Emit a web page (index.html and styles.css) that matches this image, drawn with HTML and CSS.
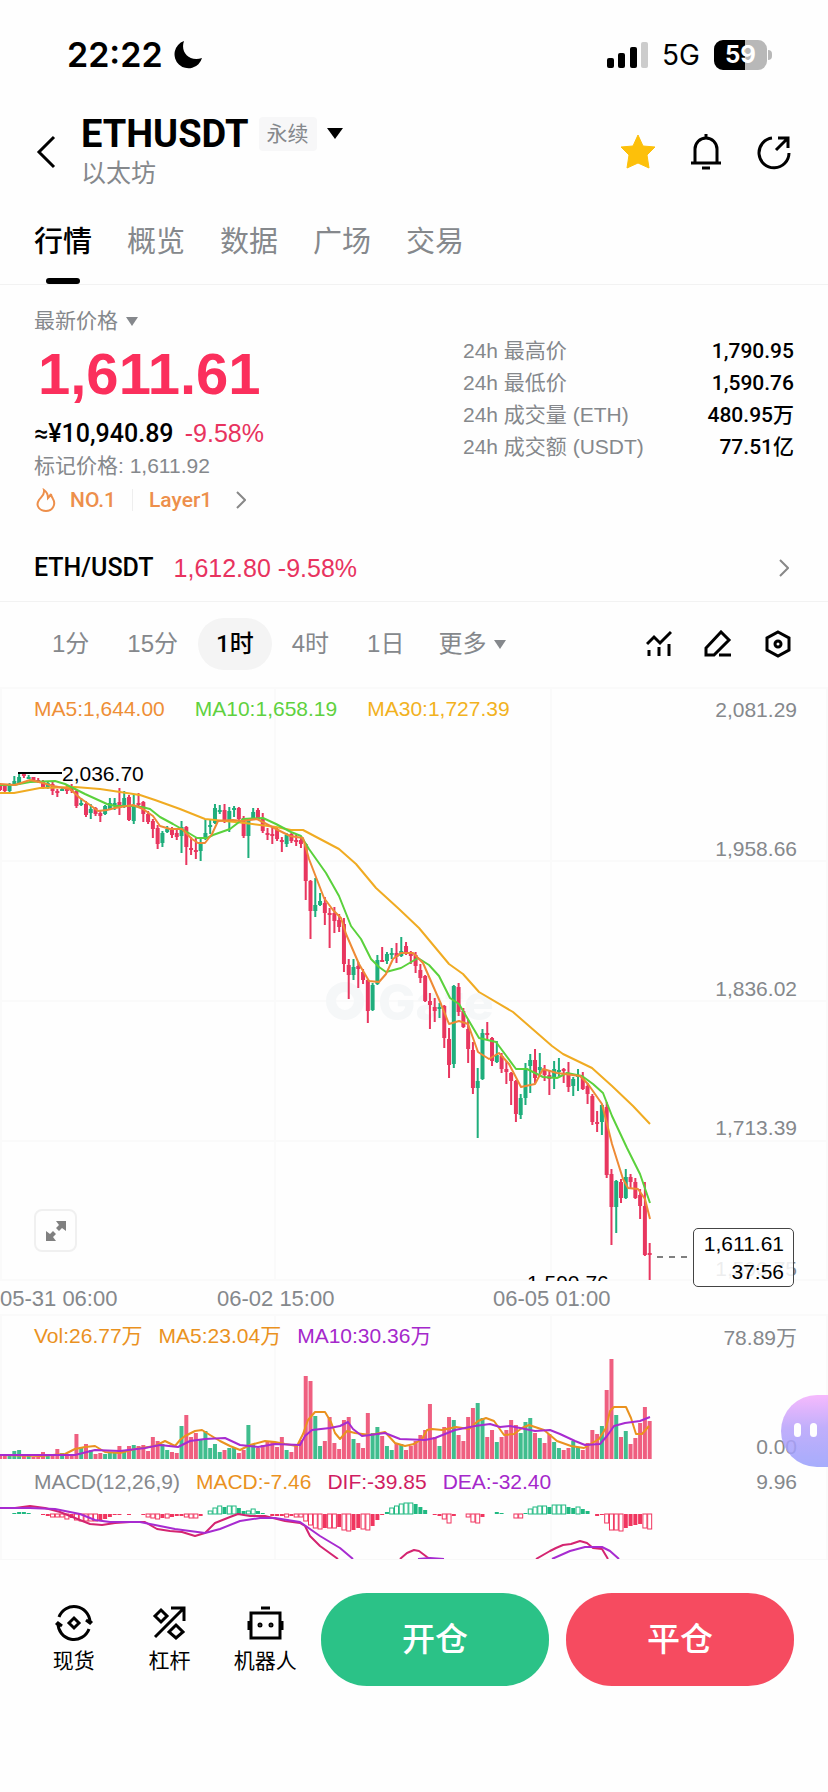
FILE: index.html
```
<!DOCTYPE html>
<html lang="zh-CN">
<head>
    <meta charset="UTF-8">
    <meta name="viewport" content="width=device-width, initial-scale=1.0">
    <title>ETHUSDT 永续</title>
    <link rel="stylesheet" href="styles.css">
</head>
<body>
    <div class="status-bar">
        <div class="status-left">
            <span class="clock">22:22</span>
            <svg width="30" height="30" viewBox="0 0 30 30"><path d="M11 1C7 12 16 22 29 18A14 14 0 1 1 11 1Z"/></svg>
        </div>
        <div class="status-right">
            <svg width="42" height="26" viewBox="0 0 42 26">
                <rect x="0" y="16" width="7" height="10" rx="2"/>
                <rect x="11" y="11" width="7" height="15" rx="2"/>
                <rect x="23" y="5" width="7" height="21" rx="2"/>
                <rect x="34" y="0" width="7" height="26" rx="2" fill="#ccc"/>
            </svg>
            <span class="network">5G</span>
            <span class="battery">59</span>
        </div>
    </div>

    <header>
        <button class="icon-button" aria-label="返回">
            <svg width="20" height="34" viewBox="0 0 20 34" class="line"><path d="M18 2L3 17L18 32"/></svg>
        </button>
        <div class="symbol">
            <div class="symbol-row">
                <h1>ETHUSDT</h1>
                <span class="badge">永续</span>
                <button class="icon-button" aria-label="切换合约">
                    <svg width="16" height="12" viewBox="0 0 16 12"><path d="M0 0H16L8 11Z"/></svg>
                </button>
            </div>
            <p>以太坊</p>
        </div>
        <div class="header-actions">
            <button class="icon-button" aria-label="收藏">
                <svg width="36" height="36" viewBox="0 0 36 36"><path fill="#fdc00a" stroke="#fdc00a" stroke-width="1" stroke-linejoin="round" d="M18 1L23 12L35 13L27 21L29 34L18 29L7 34L9 21L1 13L13 12Z"/></svg>
            </button>
            <button class="icon-button" aria-label="提醒">
                <svg width="32" height="36" viewBox="0 0 32 36" class="line"><path d="M5 29V15A11 11 0 0 1 27 15V29M1 29H31M16 5V0M12 34H20"/></svg>
            </button>
            <button class="icon-button" aria-label="分享">
                <svg width="36" height="36" viewBox="0 0 36 36" class="line"><path d="M16 4A15 15 0 1 0 33 19M20 16L31 5M22 4H32V14"/></svg>
            </button>
        </div>
    </header>

    <nav class="tabs">
        <a href="#" class="active">行情</a>
        <a href="#">概览</a>
        <a href="#">数据</a>
        <a href="#">广场</a>
        <a href="#">交易</a>
    </nav>

    <section class="ticker">
        <div class="price-block">
            <button class="price-type">最新价格
                <svg width="12" height="9" viewBox="0 0 12 9"><path d="M0 0H12L6 9Z"/></svg>
            </button>
            <div class="price">1,611.61</div>
            <div class="fiat">≈¥10,940.89 <span class="down">-9.58%</span></div>
            <div class="mark">标记价格: 1,611.92</div>
            <a href="#" class="tags">
                <svg width="20" height="24" viewBox="0 0 20 24"><path d="M8 2C9 7 5 9 3 12C-1 18 4 23 10 23C17 23 20 16 17 11C16 9 15 8 15 6C14 8 13 9 12 10C12 7 11 4 8 2Z"/></svg>
                <span>NO.1</span>
                <span class="divider"></span>
                <span>Layer1</span>
                <svg width="10" height="18" viewBox="0 0 10 18" class="chevron"><path d="M1 1L9 9L1 17"/></svg>
            </a>
        </div>
        <dl class="stats">
            <div><dt>24h 最高价</dt><dd>1,790.95</dd></div>
            <div><dt>24h 最低价</dt><dd>1,590.76</dd></div>
            <div><dt>24h 成交量 (ETH)</dt><dd>480.95万</dd></div>
            <div><dt>24h 成交额 (USDT)</dt><dd>77.51亿</dd></div>
        </dl>
    </section>

    <a href="#" class="spot-row">
        <b>ETH/USDT</b>
        <span class="down">1,612.80 -9.58%</span>
        <svg width="10" height="18" viewBox="0 0 10 18" class="chevron"><path d="M1 1L9 9L1 17"/></svg>
    </a>

    <div class="toolbar">
        <div class="intervals">
            <button>1分</button>
            <button>15分</button>
            <button class="active">1时</button>
            <button>4时</button>
            <button>1日</button>
            <button class="more">更多 <svg width="12" height="9" viewBox="0 0 12 9"><path d="M0 0H12L6 9Z"/></svg></button>
        </div>
        <div class="tools">
            <button class="icon-button" aria-label="指标">
                <svg width="26" height="28" viewBox="0 0 26 28" class="line"><path d="M1 14L8 7L14 13L25 2M3 26V20M13 26V17M23 26V14"/></svg>
            </button>
            <button class="icon-button" aria-label="画线">
                <svg width="28" height="28" viewBox="0 0 28 28" class="line"><path d="M2 25V18L17 2L25 10L10 25ZM15 25H27"/></svg>
            </button>
            <button class="icon-button" aria-label="设置">
                <svg width="28" height="28" viewBox="0 0 28 28" class="line"><path d="M14 2L25 8V20L14 26L3 20V8Z"/><circle cx="14" cy="14" r="3"/></svg>
            </button>
        </div>
    </div>

    <main>
        <section class="panel">
            <div class="legend legend-ma">
                <span class="ma5">MA5:1,644.00</span>
                <span class="ma10">MA10:1,658.19</span>
                <span class="ma30">MA30:1,727.39</span>
            </div>
            <svg class="chart" id="candleChart" viewBox="0 0 828 594"></svg>
            <button class="expand" aria-label="全屏">
                <svg width="20" height="20" viewBox="0 0 20 20"><path d="M10 0H20V10L16 7L13 10L10 7L13 4ZM0 10L4 13L7 10L10 13L7 16L10 20H0Z"/></svg>
            </button>
            <div class="price-tag">
                <span>1,611.61</span>
                <span>37:56</span>
            </div>
        </section>
        <div class="time-axis">
            <time>05-31 06:00</time>
            <time>06-02 15:00</time>
            <time>06-05 01:00</time>
        </div>
        <section class="panel">
            <div class="legend legend-vol">
                <span class="vol">Vol:26.77万</span>
                <span class="vol">MA5:23.04万</span>
                <span class="purple">MA10:30.36万</span>
            </div>
            <svg class="chart" id="volumeChart" viewBox="0 0 828 146"></svg>
            <button class="assistant" aria-label="助手"><i></i><i></i></button>
        </section>
        <section class="panel panel-last">
            <div class="legend legend-macd">
                <span>MACD(12,26,9)</span>
                <span class="vol">MACD:-7.46</span>
                <span class="dif">DIF:-39.85</span>
                <span class="purple">DEA:-32.40</span>
            </div>
            <svg class="chart" id="macdChart" viewBox="0 0 828 99"></svg>
        </section>
    </main>

    <footer>
        <a href="#">
            <svg width="38" height="38" viewBox="0 0 38 38" class="line"><path d="M4 13A16 16 0 0 1 35 18M34 25A16 16 0 0 1 3 19M31 16L35 19L37 17M7 22L3 19L1 21M19 14L24 19L19 24L14 19Z"/></svg>
            现货
        </a>
        <a href="#">
            <svg width="38" height="38" viewBox="0 0 38 38" class="line"><path d="M4 33L32 5M20 4H33V17M10 6L16 12L10 18L4 12ZM25 21L32 28L25 34L18 28Z"/></svg>
            杠杆
        </a>
        <a href="#">
            <svg width="38" height="38" viewBox="0 0 38 38" class="line"><path d="M5 9H34V34H5ZM15 4H24M3 17V26M36 17V26"/><circle cx="14" cy="21" r="1"/><circle cx="25" cy="21" r="1"/></svg>
            机器人
        </a>
        <button class="open">开仓</button>
        <button class="close">平仓</button>
    </footer>

    <script src="chart.js"></script>
</body>
</html>
```
FILE: styles.css
```
* {
    box-sizing: border-box;
}

body {
    margin: 0;
    background: #fefefe;
    color: #000;
    font-family: "Liberation Sans", "Noto Sans CJK SC", sans-serif;
    font-size: 21px;
    line-height: 32px;
    overflow-x: hidden;
}

button {
    font: inherit;
    color: inherit;
    background: none;
    border: none;
    padding: 0;
    cursor: pointer;
}

a {
    color: inherit;
    text-decoration: none;
}

h1, p, dl, dd {
    margin: 0;
}

.icon-button {
    display: flex;
}

.line {
    fill: none;
    stroke: #000;
    stroke-width: 3;
}

.chevron {
    fill: none;
    stroke: #888;
    stroke-width: 2;
}

.down {
    color: #e8335f;
}

/* Status bar */
.status-bar {
    display: flex;
    justify-content: space-between;
    align-items: center;
    padding: 36px 56px 24px 67px;
    height: 98px;
}

.status-left, .status-right {
    display: flex;
    align-items: center;
}

.status-left {
    gap: 10px;
}

.clock {
    font-family: Inter, sans-serif;
    font-size: 34px;
    font-weight: 600;
}

.network {
    font-family: Inter, sans-serif;
    font-size: 28px;
    margin: 0 14px 0 13px;
}

.battery {
    position: relative;
    width: 53px;
    height: 30px;
    border-radius: 9px;
    background: linear-gradient(to right, #000 59%, #b8b8b8 59%);
    color: #fff;
    font-family: Inter, sans-serif;
    font-size: 24px;
    font-weight: 700;
    line-height: 30px;
    text-align: center;
    margin-right: 5px;
}

.battery::after {
    content: "";
    position: absolute;
    right: -5px;
    top: 10px;
    width: 4px;
    height: 10px;
    border-radius: 0 5px 5px 0;
    background: #b8b8b8;
}

/* Header */
header {
    display: flex;
    align-items: center;
    height: 102px;
    padding: 6px 36px 0;
}

.symbol {
    margin-left: 25px;
    flex: 1;
}

.symbol-row {
    display: flex;
    align-items: center;
    gap: 10px;
    height: 42px;
}

.symbol h1 {
    font-family: Roboto, sans-serif;
    font-size: 38px;
    font-weight: 700;
    line-height: 40px;
}

.symbol p {
    color: #85888c;
    font-size: 25px;
    line-height: 36px;
}

.badge {
    background: #f7f7f8;
    color: #85888c;
    padding: 0 8px;
    line-height: 34px;
    border-radius: 4px;
}

.header-actions {
    display: flex;
    align-items: center;
    gap: 34px;
}

/* Tabs */
.tabs {
    display: flex;
    gap: 35px;
    height: 85px;
    padding: 0 34px;
    border-bottom: 1px solid #f2f2f2;
}

.tabs a {
    display: flex;
    align-items: center;
    position: relative;
    font-size: 29px;
    color: #85888c;
}

.tabs .active {
    color: #000;
    font-weight: 500;
}

.tabs .active::after {
    content: "";
    position: absolute;
    bottom: 0;
    left: 50%;
    width: 34px;
    height: 6px;
    margin-left: -17px;
    border-radius: 3px;
    background: #000;
}

/* Ticker */
.ticker {
    display: flex;
    justify-content: space-between;
    padding: 20px 34px 19px;
}

.price-type {
    display: flex;
    align-items: center;
    gap: 8px;
    color: #85888c;
}

.price-type svg, .intervals svg {
    fill: #85888c;
}

.price {
    color: #fb2f5c;
    font-size: 58px;
    font-weight: 700;
    line-height: 74px;
    margin: 0 0 6px 4px;
}

.fiat, .spot-row b, .stats dd {
    font-family: Roboto, "Noto Sans CJK SC", sans-serif;
    font-weight: 500;
}

.fiat {
    font-size: 25px;
}

.fiat .down {
    margin-left: 5px;
    font-family: "Liberation Sans", sans-serif;
    font-weight: 400;
}

.mark {
    color: #85888c;
    margin-bottom: 2px;
}

.tags {
    display: flex;
    align-items: center;
    gap: 14px;
    color: #ed8f4b;
    font-family: Roboto, sans-serif;
    font-weight: 500;
}

.tags svg:first-child {
    fill: none;
    stroke: #ed8f4b;
    stroke-width: 2;
    margin-left: 2px;
}

.tags .divider {
    width: 1px;
    height: 22px;
    background: #eee;
    margin: 0 2px;
}

.tags .chevron {
    margin-left: 10px;
}

.stats {
    width: 331px;
    margin-top: 30px;
}

.stats div {
    display: flex;
    justify-content: space-between;
}

.stats dt {
    color: #85888c;
}

.spot-row {
    display: flex;
    align-items: center;
    gap: 20px;
    height: 67px;
    padding: 0 39px 0 34px;
    border-bottom: 1px solid #f2f2f2;
    font-size: 25px;
}

.spot-row .chevron {
    margin-left: auto;
}

/* Interval toolbar */
.toolbar {
    display: flex;
    justify-content: space-between;
    align-items: center;
    padding: 16px 36px 17px 34px;
}

.intervals {
    display: flex;
    gap: 2px;
}

.intervals button {
    padding: 0 18px;
    border-radius: 26px;
    font-size: 24px;
    line-height: 52px;
    color: #85888c;
    white-space: nowrap;
}

.intervals .active {
    background: #f4f4f4;
    color: #000;
    font-family: Roboto, "Noto Sans CJK SC", sans-serif;
    font-weight: 500;
}

.intervals .more {
    display: flex;
    align-items: center;
    gap: 8px;
    padding-left: 14px;
}

.tools {
    display: flex;
    gap: 32px;
}

/* Charts */
.panel {
    position: relative;
}

.panel-last {
    border-bottom: 1px solid #f8f8f8;
}

.chart {
    display: block;
    width: 100%;
    font-size: 21px;
}

.chart .grid {
    stroke: #fafafa;
    stroke-width: 2;
}

.chart .axis {
    fill: #85888c;
    text-anchor: end;
}

.chart .watermark {
    font-family: Inter, sans-serif;
    font-size: 50px;
    font-weight: 800;
    fill: #f5f7f8;
}

.chart polyline {
    fill: none;
    stroke-width: 2;
    stroke-linejoin: round;
}

.legend {
    position: absolute;
    left: 34px;
    top: 6px;
    display: flex;
    gap: 16px;
    color: #85888c;
    white-space: nowrap;
}

.legend-ma {
    gap: 30px;
}

.ma5 { color: #ee8f36; }
.ma10 { color: #5fd13e; }
.ma30 { color: #f2b21f; }
.vol { color: #ea921f; }
.purple { color: #a528cb; }
.dif { color: #d01d62; }

.expand {
    position: absolute;
    left: 34px;
    bottom: 29px;
    display: flex;
    align-items: center;
    justify-content: center;
    width: 43px;
    height: 43px;
    border: 2px solid #f0f0f0;
    border-radius: 8px;
}

.expand svg {
    fill: #808080;
}

.price-tag {
    position: absolute;
    right: 34px;
    bottom: -6px;
    display: flex;
    flex-direction: column;
    width: 101px;
    padding: 1px 9px 0;
    border: 1px solid #444;
    border-radius: 5px;
    background: rgba(255, 255, 255, 0.85);
    line-height: 28px;
    text-align: right;
}

.time-axis {
    display: flex;
    height: 33px;
    font-size: 22px;
    line-height: 36px;
    color: #85888c;
}

.time-axis time {
    width: 217px;
}

.time-axis time + time {
    width: 276px;
}

.assistant {
    position: absolute;
    right: 0;
    bottom: -7px;
    z-index: 1;
    display: flex;
    gap: 9px;
    width: 47px;
    height: 72px;
    padding: 28px 0 0 13px;
    border-radius: 36px 0 0 36px;
    background: linear-gradient(#f5aefd, #b7a2fb 45%, #989ffc);
    opacity: 0.85;
}

.assistant i {
    width: 7px;
    height: 14px;
    border-radius: 4px;
    background: #fff;
}

/* Bottom bar */
footer {
    display: flex;
    align-items: center;
    padding: 33px 34px 107px 26px;
}

footer a {
    display: flex;
    flex-direction: column;
    align-items: center;
    gap: 4px;
    flex: 1;
    line-height: 30px;
}

footer button {
    width: 228px;
    height: 93px;
    border-radius: 46px;
    color: #fff;
    font-size: 33px;
    font-weight: 500;
}

.open {
    background: #2bc287;
    margin: 0 17px 0 8px;
}

.close {
    background: #f64b60;
}
```
FILE: chart.js
```
const UP = "#1fae7c";
const DOWN = "#e8365f";
const STEP = 4.777;

// [high, body top, body bottom, low, up?] in chart units
const candles = [
    [96,97,103,104,0],[98,99,104,106,0],[96,98,104,105,1],[89,94,97,98,1],[86,90,97,98,1],[86,87,88,91,0],[88,90,91,92,1],[90,90,94,95,0],
    [91,93,95,96,0],[93,95,101,102,0],[94,96,100,102,1],[94,97,104,108,0],[102,104,105,110,0],[101,102,103,104,1],[98,101,104,107,0],[97,101,104,106,0],
    [103,104,119,121,0],[111,116,117,119,1],[114,117,128,130,0],[117,122,126,132,1],[120,121,127,129,0],[124,126,129,135,0],[118,119,127,128,1],[111,116,122,123,1],
    [111,116,117,123,1],[101,115,121,128,0],[104,111,119,121,1],[108,110,133,134,0],[107,119,134,137,1],[106,116,118,119,0],[114,115,127,135,0],[124,127,135,137,0],
    [132,134,142,151,0],[138,141,157,162,0],[144,146,156,160,1],[139,142,145,146,1],[140,142,148,151,0],[142,146,150,153,0],[134,140,149,166,1],[139,140,160,178,0],
    [150,161,162,168,0],[151,163,164,172,0],[151,155,164,174,1],[132,146,152,153,1],[133,138,139,147,1],[117,121,136,137,1],[118,123,124,127,1],[117,123,134,136,0],
    [120,124,134,145,1],[119,121,123,130,1],[120,121,132,134,0],[129,131,149,151,0],[131,132,149,171,1],[121,125,132,133,1],[121,123,131,133,0],[126,131,144,146,0],
    [141,146,147,153,0],[140,147,148,157,0],[140,142,152,154,0],[150,153,155,165,0],[146,148,157,160,1],[146,147,154,156,0],[148,153,155,159,0],[149,153,157,161,0],
    [156,157,194,213,0],[193,194,224,252,0],[191,218,224,230,1],[206,214,218,219,1],[210,216,226,238,0],[221,226,227,261,0],[220,226,234,246,0],[227,233,240,245,0],
    [231,237,277,285,0],[272,278,288,312,0],[272,280,288,293,1],[275,279,282,301,0],[282,285,293,297,0],[292,293,324,336,0],[296,298,323,324,1],[268,273,297,298,1],
    [260,273,274,275,0],[265,267,274,277,1],[261,266,267,272,1],[256,266,270,276,0],[250,264,269,270,1],[255,259,266,268,0],[264,267,268,277,0],[265,268,279,286,0],
    [277,283,291,296,0],[288,289,314,315,0],[306,314,318,342,0],[311,320,324,335,0],[316,320,321,331,1],[318,319,351,361,0],[341,352,378,391,0],[298,299,377,381,1],
    [296,300,325,329,0],[321,324,340,341,0],[333,342,362,376,0],[355,363,401,407,0],[381,394,401,451,1],[342,346,392,393,1],[335,346,348,352,0],[350,351,374,379,0],
    [354,368,375,376,1],[366,369,382,386,0],[374,382,385,397,0],[385,386,394,418,0],[393,394,427,435,0],[407,411,428,432,1],[376,381,411,418,1],[367,373,379,406,1],
    [362,373,391,396,0],[366,380,383,388,1],[378,382,388,394,0],[384,388,392,408,0],[374,382,391,402,1],[371,383,384,389,1],[381,382,383,396,0],[375,387,400,405,0],
    [390,392,399,409,1],[382,388,390,404,1],[385,390,402,403,0],[396,399,407,417,0],[407,409,435,438,0],[424,435,436,445,0],[417,418,435,448,1],[415,420,488,491,0],
    [482,487,520,558,0],[493,494,520,546,1],[492,495,511,516,0],[482,490,511,512,1],[487,490,495,502,0],[491,495,511,512,0],[502,508,519,532,0],[495,519,568,569,0],
    [556,566,568,593,0]
];

const ma30 = "0,106 14,106 40,101 75,100 100,102 140,108 155,113 180,122 205,132 225,134 245,136 276,140 291,143 303,143 339,162 356,177 376,201 399,222 419,241 449,277 463,287 479,305 513,325 552,359 563,367 592,381 612,399 633,419 650,437";
const ma10 = "0,98 14,98 30,95 55,94 65,97 85,107 107,117 115,119 133,119 142,120 150,122 160,130 173,137 187,145 197,151 207,151 213,148 230,142 243,132 263,131 276,137 291,145 301,149 309,162 326,186 339,209 351,239 361,252 371,272 379,280 386,285 401,281 418,271 429,278 439,289 450,311 459,317 469,334 479,351 496,355 516,382 527,382 543,390 557,391 567,386 582,389 593,397 603,406 612,429 627,461 640,487 650,516";
const ma5 = "0,97 15,98 30,93 43,96 53,99 70,102 80,111 90,118 98,124 107,123 115,121 133,118 143,122 153,129 160,139 170,142 182,142 192,152 198,156 205,156 212,147 218,134 233,133 242,134 257,132 276,142 290,149 303,151 309,172 324,211 333,223 341,231 346,247 359,277 369,294 379,295 386,287 393,272 401,266 413,266 423,276 441,317 449,337 459,334 468,337 478,365 489,372 499,366 509,377 521,400 535,397 543,382 557,386 580,389 588,397 602,417 612,457 623,492 628,501 638,502 645,512 650,532";

const volumes = [
    4,4,3,8,9,4,3,2,2,7,4,4,10,6,5,5,25,12,15,9,5,6,5,6,7,13,9,13,14,13,14,8,22,18,15,9,7,6,33,44,22,26,20,28,11,15,7,9,11,11,6,9,34,15,11,14,18,18,12,22,
    9,7,13,19,83,78,43,13,18,42,16,10,39,42,20,16,11,46,26,32,23,13,9,16,15,9,13,18,24,29,55,22,13,32,42,39,24,18,42,51,56,41,22,29,17,22,29,39,34,26,37,41,
    26,21,16,25,17,11,9,11,18,12,9,16,29,25,33,69,100,44,22,28,15,21,36,52,38
];
const volMa5 = "0,141 40,142 65,140 75,135 85,133 95,132 105,138 120,139 135,135 155,132 165,127 175,132 180,126 185,122 195,117 202,116 210,121 220,127 230,132 240,136 250,131 265,127 275,128 285,130 297,132 303,120 308,106 315,98 325,98 331,108 335,119 340,125 347,117 355,119 370,121 385,118 395,129 405,132 414,130 422,125 427,116 432,115 442,116 456,113 469,115 478,107 486,104 494,107 504,121 514,120 522,114 529,111 544,116 557,127 571,132 584,134 599,125 606,114 610,97 614,93 626,93 631,104 636,120 642,120 649,112";
const volMa10 = "0,141 75,141 95,136 120,137 145,134 160,131 178,133 190,127 205,125 225,124 240,131 258,133 275,130 300,131 305,122 312,116 330,114 340,112 348,108 353,115 362,122 370,121 385,119 400,125 425,126 435,124 455,116 475,112 490,110 500,113 510,112 520,114 535,117 550,116 560,120 575,127 585,131 600,130 607,122 614,112 625,109 640,107 650,103";

const histogram = [
    0,0,0,1,2,2,1,0,0,-1,-2,-3,-3,-3,-5,-4,-6,-7,-7,-7,-7,-6,-5,-3,-1,-1,0,-1,0,0,-1,-3,-4,-5,-4,-4,-3,-2,-2,-3,-4,-4,-2,0,3,6,8,7,8,8,6,3,3,5,3,1,0,-2,-2,-2,-3,
    -2,-3,-3,-7,-11,-14,-15,-14,-14,-14,-13,-16,-17,-16,-14,-15,-16,-12,-6,-1,2,6,8,10,11,11,10,7,4,0,-1,-2,-5,-9,-2,0,0,-3,-8,-9,-3,0,0,2,1,0,0,-4,-4,1,5,7,8,8,
    7,9,9,9,7,6,7,5,3,0,-2,-1,-9,-16,-16,-17,-14,-12,-11,-10,-14,-15
];
const dif = [
    "0,48 15,48 30,46 45,48 60,52 75,58 90,64 102,65 115,63 130,62 145,62 157,69 170,71 182,72 195,76 205,73 215,63 230,57 238,54 250,56 265,56 285,61 300,63 305,66 310,76 320,86 338,99",
    "400,99 407,93 414,90 419,91 427,97 432,100",
    "536,99 550,91 556,88 563,85 571,84 580,81 587,83 593,88 602,89 608,99"
];
const dea = [
    "0,48 30,48 55,49 80,54 95,60 110,62 140,62 160,66 175,69 205,73 220,69 240,61 260,58 275,58 300,62 320,76 340,88 353,99",
    "418,99 430,98 444,99",
    "552,99 570,91 585,87 602,87 610,91 619,99"
];

const rect = (x, y, w, h, color) => `<rect x="${x}" y="${y}" width="${w}" height="${h}" fill="${color}"/>`;
const line = (points, color) => `<polyline points="${points}" stroke="${color}"/>`;
const label = (y, text) => `<text class="axis" x="797" y="${y}">${text}</text>`;

function grid(height, rows) {
    const cols = [1, 275, 551, 827].map(x => `<path class="grid" d="M${x} 0V${height}"/>`);
    return cols.join("") + rows.map(y => `<path class="grid" d="M0 ${y}H828"/>`).join("");
}

function drawCandles() {
    let out = grid(594, [1, 174, 314, 454, 593]);
    out += `<circle cx="345" cy="314" r="14" fill="none" stroke="#f5f7f8" stroke-width="10"/>`;
    out += `<text class="watermark" x="378" y="333">Gate</text>`;
    candles.forEach(([high, top, bottom, low, up], i) => {
        const x = i * STEP;
        const color = up ? UP : DOWN;
        out += rect(x - 1, high, 2, low - high, color);
        out += rect(x - 2, top, 4, Math.max(bottom - top, 2), color);
    });
    out += line(ma30, "#f0ab22") + line(ma10, "#5ad13c") + line(ma5, "#ee8a35");
    out += label(30, "2,081.29") + label(169, "1,958.66") + label(309, "1,836.02") + label(448, "1,713.39") + label(589, "1,590.75");
    out += `<path d="M18 86H62" stroke="#000" stroke-width="2"/><text x="62" y="94">2,036.70</text>`;
    out += `<text x="527" y="603">1,590.76</text>`;
    out += `<path d="M657 570H690" stroke="#000" stroke-width="1" stroke-dasharray="6 6"/>`;
    document.getElementById("candleChart").innerHTML = out;
}

function drawVolume() {
    let out = grid(146, [1]);
    volumes.forEach((v, i) => {
        out += rect(i * STEP - 2, 145 - v, 4, v, candles[i][4] ? "#40bd8e" : "#ef5f80");
    });
    out += line(volMa5, "#ea921f") + line(volMa10, "#a72bd0");
    out += label(31, "78.89万") + label(140, "0.00");
    document.getElementById("volumeChart").innerHTML = out;
}

function drawMacd() {
    let out = grid(99, []);
    histogram.forEach((v, i) => {
        if (v === 0) {
            return;
        }
        const x = i * STEP - 2;
        const size = Math.abs(v);
        const y = v > 0 ? 54 - size : 54;
        const color = v > 0 ? "#1fb981" : "#f0355f";
        const growing = i > 0 && size > 2 && size >= Math.abs(histogram[i - 1]);
        out += growing
            ? `<rect x="${x}" y="${y}" width="4" height="${size}" fill="#fff" stroke="${color}"/>`
            : rect(x, y, 4, size, color);
    });
    dif.forEach(points => out += line(points, "#d42470"));
    dea.forEach(points => out += line(points, "#a72bd0"));
    out += label(29, "9.96");
    document.getElementById("macdChart").innerHTML = out;
}

drawCandles();
drawVolume();
drawMacd();
```
